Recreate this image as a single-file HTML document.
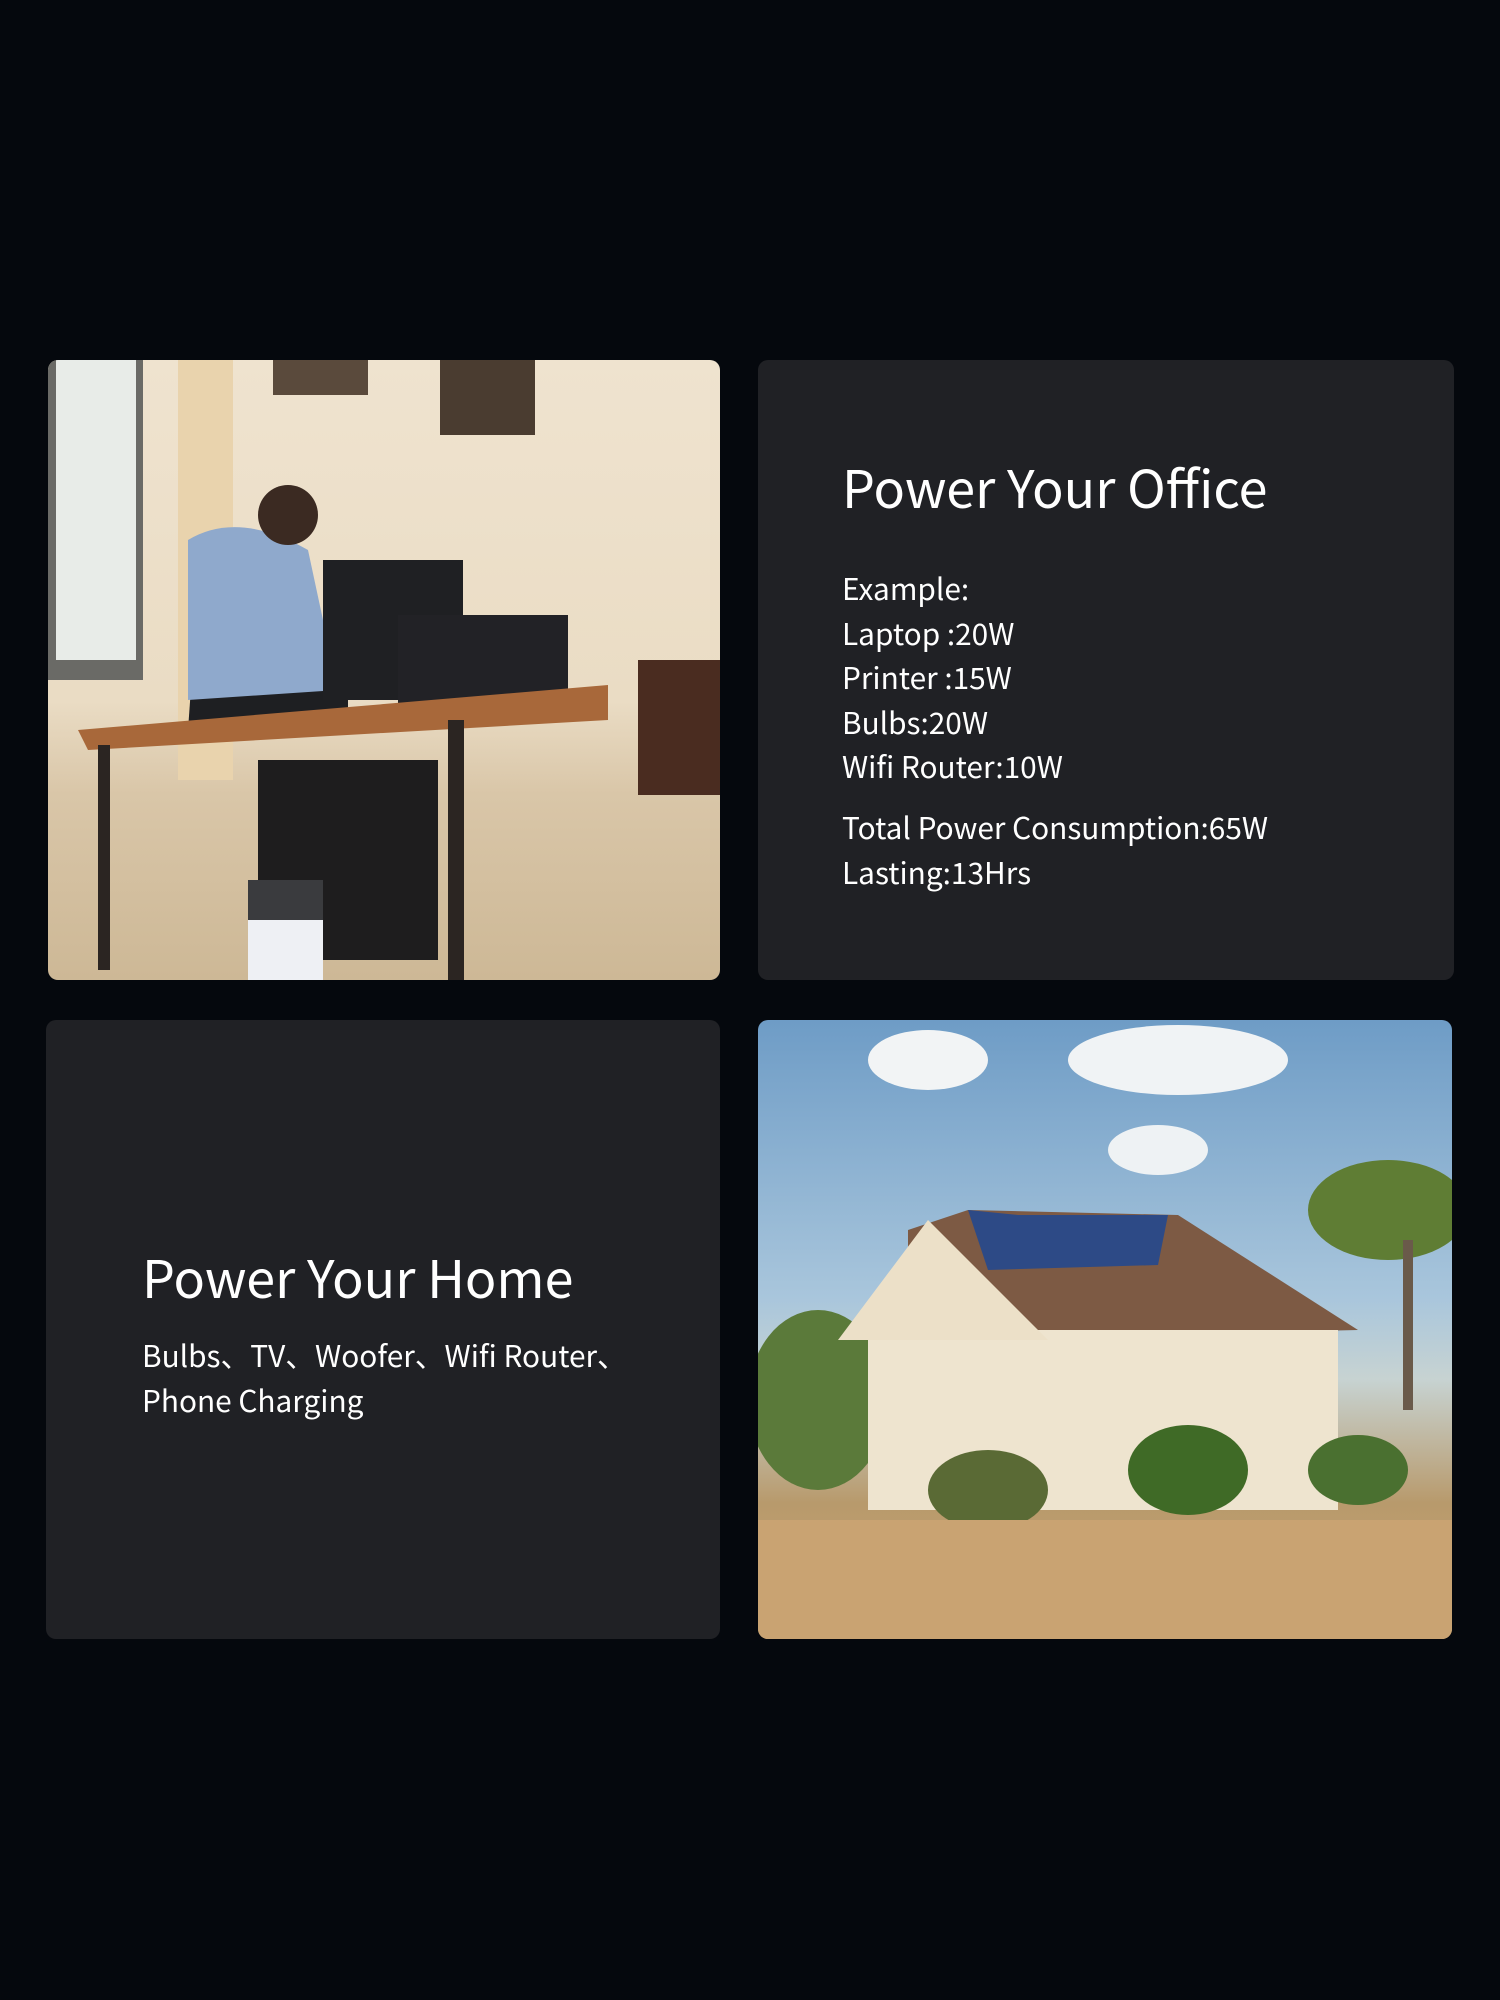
<!DOCTYPE html>
<html><head><meta charset="utf-8"><style>
*{margin:0;padding:0;box-sizing:border-box}
body{width:1500px;height:2000px;background:#05080d;position:relative;overflow:hidden;font-family:"Noto Sans CJK JP","Liberation Sans",sans-serif;color:#fff}
.card{position:absolute;border-radius:10px;overflow:hidden;background:#202125}
.t{position:absolute;font-size:52px;line-height:1;white-space:nowrap;font-weight:400}
.b{position:absolute;font-size:29.8px;line-height:44.5px;white-space:nowrap}
</style></head><body>
<div class="card" style="left:48px;top:360px;width:672px;height:620px;background:linear-gradient(#efe3cf 0%,#eadcc4 55%,#d9c6a8 70%,#cdb896 100%)">
<svg width="672" height="620" viewBox="0 0 672 620">
<rect x="0" y="0" width="95" height="320" fill="#6a6a66"/><rect x="8" y="0" width="80" height="300" fill="#e8ece8"/>
<rect x="130" y="0" width="55" height="420" fill="#e9d3ad"/>
<rect x="225" y="0" width="95" height="35" fill="#5a4a3c"/><rect x="392" y="0" width="95" height="75" fill="#4a3c30"/>
<rect x="590" y="300" width="82" height="135" fill="#4a2c20"/>
<path d="M140 370 L300 360 L300 300 L200 250 L150 230 Z" fill="#1e1f22"/>
<path d="M140 180 Q190 150 260 190 L290 330 L140 340 Z" fill="#8fa9cc"/>
<circle cx="240" cy="155" r="30" fill="#3b2a22"/>
<rect x="275" y="200" width="140" height="140" fill="#1f2023"/>
<rect x="350" y="255" width="170" height="100" fill="#222226"/>
<path d="M30 370 L560 325 L560 360 L40 390 Z" fill="#a8683a"/>
<rect x="50" y="385" width="12" height="225" fill="#2b2522"/><rect x="400" y="360" width="16" height="260" fill="#2b2522"/>
<rect x="210" y="400" width="180" height="200" fill="#1e1d1e"/>
<rect x="200" y="520" width="75" height="100" fill="#eef0f4"/><rect x="200" y="520" width="75" height="40" fill="#3a3b3e"/>
</svg></div>
<div class="card" style="left:758px;top:360px;width:696px;height:620px">
<div class="t" style="left:84px;top:100px">Power Your Office</div>
<div class="b" style="left:84px;top:205px">Example:<br>Laptop :20W<br>Printer :15W<br>Bulbs:20W<br>Wifi Router:10W</div>
<div class="b" style="left:84px;top:444px">Total Power Consumption:65W<br>Lasting:13Hrs</div>
</div>
<div class="card" style="left:46px;top:1020px;width:674px;height:619px">
<div class="t" style="left:96px;top:230px">Power Your Home</div>
<div class="b" style="left:96px;top:312px">Bulbs、TV、Woofer、Wifi Router、<br>Phone Charging</div>
</div>
<div class="card" style="left:758px;top:1020px;width:694px;height:619px;background:linear-gradient(#6e9cc6 0%,#a9c6dc 45%,#c7d3d2 58%,#b89a6c 78%,#c9a372 100%)">
<svg width="694" height="619" viewBox="0 0 694 619">
<ellipse cx="170" cy="40" rx="60" ry="30" fill="#f2f4f5"/><ellipse cx="420" cy="40" rx="110" ry="35" fill="#f0f3f5"/><ellipse cx="400" cy="130" rx="50" ry="25" fill="#eef2f4"/>
<ellipse cx="60" cy="380" rx="70" ry="90" fill="#5b7a3a"/>
<ellipse cx="630" cy="190" rx="80" ry="50" fill="#5f7d34"/><rect x="645" y="220" width="10" height="170" fill="#6a5a4a"/>
<path d="M150 210 L210 190 L420 195 L600 310 L150 320 Z" fill="#7d5a44"/>
<path d="M210 190 L260 195 L410 195 L400 245 L230 250 Z" fill="#2d4a86"/>
<rect x="110" y="310" width="470" height="180" fill="#eee4cf"/>
<path d="M80 320 L170 200 L290 320 Z" fill="#ece0c8"/>
<ellipse cx="230" cy="470" rx="60" ry="40" fill="#5a6a35"/><ellipse cx="430" cy="450" rx="60" ry="45" fill="#3f6a26"/><ellipse cx="600" cy="450" rx="50" ry="35" fill="#4a7030"/>
<rect x="0" y="500" width="694" height="119" fill="#c9a372"/>
</svg></div>
</body></html>
